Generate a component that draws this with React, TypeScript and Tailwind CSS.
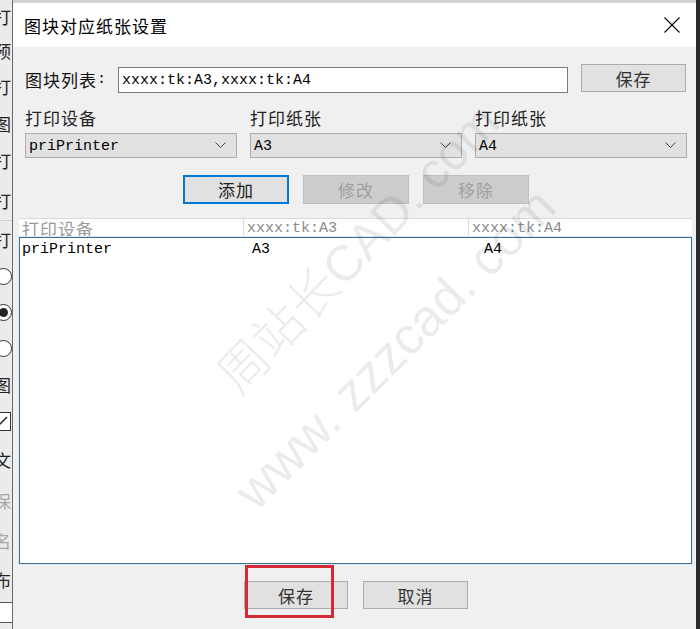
import React from "react";

const CJK = "font-['Noto_Sans_CJK_SC',sans-serif]";
const MONO = "font-['Liberation_Mono','Noto_Sans_CJK_SC',monospace]";

function Chevron() {
  return (
    <svg width="11" height="7" viewBox="0 0 11 7" className="shrink-0">
      <polyline points="0.5,0.5 5.5,5.5 10.5,0.5" fill="none" stroke="#444" strokeWidth="1" />
    </svg>
  );
}

function Select({ value }: { value: string }) {
  return (
    <div className="w-[212px] h-[25px] bg-[#e1e1e1] border border-[#adadad] flex items-center justify-between pl-[3px] pr-[10px]">
      <span className={`${MONO} text-[15px] text-black leading-none mt-[2px]`}>{value}</span>
      <Chevron />
    </div>
  );
}

function LeftChar({ ch, h, gray }: { ch: string; h: number; gray?: boolean }) {
  return (
    <div className="flex items-center overflow-hidden" style={{ height: h }}>
      <span className={`${CJK} text-[17px] leading-none ml-[-6px] ${gray ? "text-[#a8a8a8]" : "text-[#222]"}`}>{ch}</span>
    </div>
  );
}

function LeftRadio({ h, filled }: { h: number; filled?: boolean }) {
  return (
    <div className="flex items-center overflow-hidden" style={{ height: h }}>
      <div className="ml-[-5px] w-[17px] h-[17px] rounded-full border border-[#333] bg-white flex items-center justify-center shrink-0">
        {filled && <div className="w-[9px] h-[9px] rounded-full bg-[#222]" />}
      </div>
    </div>
  );
}

export default function App() {
  return (
    <div className="w-[700px] h-[629px] overflow-hidden flex bg-[#2a2a2a] relative">
      {/* background window strip */}
      <div className="w-[13px] h-full bg-[#ebebeb] border-r border-[#6a6a6a] flex flex-col shrink-0 overflow-hidden">
        <LeftChar ch="打" h={33} />
        <LeftChar ch="预" h={35} />
        <LeftChar ch="打" h={37} />
        <LeftChar ch="图" h={36} />
        <LeftChar ch="打" h={39} />
        <LeftChar ch="打" h={40} />
        <div className="h-px bg-[#cfcfcf]" />
        <LeftChar ch="打" h={37} />
        <LeftRadio h={37} />
        <LeftRadio h={35} filled />
        <LeftRadio h={36} />
        <LeftChar ch="图" h={37} />
        <div className="h-[36px] flex items-center overflow-hidden">
          <div className="ml-[-8px] w-[19px] h-[19px] border border-[#333] bg-white flex items-center justify-center shrink-0">
            <svg width="13" height="10" viewBox="0 0 13 10">
              <polyline points="1,5 4.5,8.5 12,1" fill="none" stroke="#222" strokeWidth="1.5" />
            </svg>
          </div>
        </div>
        <LeftChar ch="文" h={40} />
        <LeftChar ch="保" h={42} gray />
        <LeftChar ch="名" h={38} gray />
        <LeftChar ch="布" h={40} />
        <div className="h-[3px]" />
        <div className="h-[21px] border-y border-[#555] bg-white" />
      </div>

      {/* dialog column */}
      <div className="w-[683px] h-full flex flex-col shrink-0">
        <div className="h-[3px] bg-[#d4d4d4]" />
        <div className="flex-1 flex flex-col bg-[#f0f0f0]">
          {/* title bar */}
          <div className="h-[44px] bg-white flex items-center justify-between pl-[11px] pr-[16px]">
            <span className={`${CJK} text-[17px] tracking-[1px] text-black leading-none`}>图块对应纸张设置</span>
            <svg width="16" height="16" viewBox="0 0 16 16">
              <line x1="0.5" y1="0.5" x2="15.5" y2="15.5" stroke="#000" strokeWidth="1.1" />
              <line x1="15.5" y1="0.5" x2="0.5" y2="15.5" stroke="#000" strokeWidth="1.1" />
            </svg>
          </div>

          {/* row 1 */}
          <div className="mt-[17px] pl-[12px] flex items-start h-[29px]">
            <div className="w-[93px] h-[29px] flex items-center pt-[2px]">
              <span className={`${CJK} text-[17px] tracking-[1px] text-[#111] leading-none`}>图块列表</span>
              <span className={`${MONO} text-[15px] text-[#111] leading-none`}>:</span>
            </div>
            <div className="mt-[3px] w-[450px] h-[26px] bg-white border border-[#7a7a7a] flex items-center pl-[3px]">
              <span className={`${MONO} text-[15px] text-black leading-none`}>xxxx:tk:A3,xxxx:tk:A4</span>
            </div>
            <div className="ml-[13px] w-[105px] h-[28px] bg-[#e1e1e1] border border-[#adadad] flex items-center justify-center">
              <span className={`${CJK} text-[17px] tracking-[1px] text-[#333] leading-none`}>保存</span>
            </div>
          </div>

          {/* row 2 labels */}
          <div className="mt-[14px] pl-[12px] flex gap-[13px] h-[20px]">
            {["打印设备", "打印纸张", "打印纸张"].map((t, i) => (
              <div key={i} className="w-[212px] flex items-center">
                <span className={`${CJK} text-[17px] tracking-[1px] text-[#222] leading-none`}>{t}</span>
              </div>
            ))}
          </div>

          {/* selects */}
          <div className="mt-[6px] pl-[12px] flex gap-[13px]">
            <Select value="priPrinter" />
            <Select value="A3" />
            <Select value="A4" />
          </div>

          {/* action buttons */}
          <div className="mt-[17px] pl-[170px] flex gap-[14px]">
            <div className="w-[106px] h-[29px] bg-[#e1e1e1] border-2 border-[#0078d7] flex items-center justify-center">
              <span className={`${CJK} text-[17px] tracking-[1px] text-[#222] leading-none`}>添加</span>
            </div>
            <div className="w-[106px] h-[29px] bg-[#cccccc] border border-[#bfbfbf] flex items-center justify-center">
              <span className={`${CJK} text-[17px] tracking-[1px] text-[#a0a0a0] leading-none`}>修改</span>
            </div>
            <div className="w-[106px] h-[29px] bg-[#cccccc] border border-[#bfbfbf] flex items-center justify-center">
              <span className={`${CJK} text-[17px] tracking-[1px] text-[#a0a0a0] leading-none`}>移除</span>
            </div>
          </div>

          {/* list */}
          <div className="mt-[14px] ml-[6px] w-[673px] flex flex-col">
            <div className="h-[19px] bg-white border-t border-[#d9d9d9] flex">
              <div className="w-[225px] border-r border-[#dcdcdc] flex items-center pl-[3px]">
                <span className={`${CJK} text-[17px] tracking-[1px] text-[#9a9a9a] leading-none`}>打印设备</span>
              </div>
              <div className="w-[225px] border-r border-[#dcdcdc] flex items-center pl-[3px]">
                <span className={`${MONO} text-[15px] text-[#8a8a8a] leading-none`}>xxxx:tk:A3</span>
              </div>
              <div className="flex-1 flex items-center pl-[3px]">
                <span className={`${MONO} text-[15px] text-[#8a8a8a] leading-none`}>xxxx:tk:A4</span>
              </div>
            </div>
            <div className="h-[327px] bg-white border border-[#41708a] shadow-[0_0_0_1px_#d6eaf5]">
              <div className="h-[22px] flex items-center">
                <span className={`${MONO} text-[15px] text-black leading-none ml-[2px] w-[230px]`}>priPrinter</span>
                <span className={`${MONO} text-[15px] text-black leading-none w-[232px]`}>A3</span>
                <span className={`${MONO} text-[15px] text-black leading-none`}>A4</span>
              </div>
            </div>
          </div>

          {/* bottom buttons */}
          <div className="mt-[17px] pl-[231px] flex gap-[15px]">
            <div className="w-[104px] h-[28px] bg-[#e1e1e1] border border-[#adadad] flex items-center justify-center">
              <span className={`${CJK} text-[17px] tracking-[1px] text-[#333] leading-none`}>保存</span>
            </div>
            <div className="w-[105px] h-[28px] bg-[#e1e1e1] border border-[#adadad] flex items-center justify-center">
              <span className={`${CJK} text-[17px] tracking-[1px] text-[#333] leading-none`}>取消</span>
            </div>
          </div>
        </div>
      </div>

      {/* red highlight */}
      <div className="absolute left-[245px] top-[565px] w-[89px] h-[53px] border-[3px] border-[#d42a35]" />

      {/* watermark */}
      <div className="absolute left-[245px] top-[352px] origin-bottom-left -rotate-[46deg] pointer-events-none whitespace-nowrap">
        <span className="font-['Liberation_Sans','Noto_Sans_CJK_SC',sans-serif] font-light text-[50px] leading-none text-black/[0.08]">周站长CAD. com</span>
      </div>
      <div className="absolute left-[262px] top-[466px] origin-bottom-left -rotate-[45deg] pointer-events-none whitespace-nowrap">
        <span className="font-['Liberation_Sans','Noto_Sans_CJK_SC',sans-serif] font-light text-[52px] leading-none text-black/[0.08]">www. zzzcad. com</span>
      </div>
    </div>
  );
}
